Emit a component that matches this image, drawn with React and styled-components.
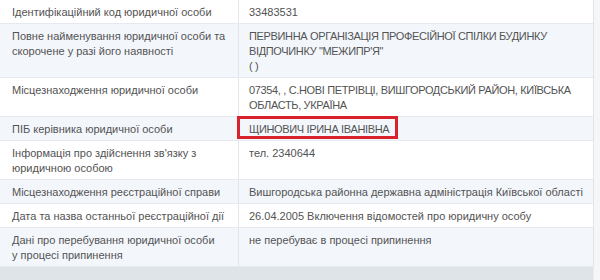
import styled, { createGlobalStyle } from 'styled-components'

const GlobalStyle = createGlobalStyle`
	body {
		margin: 0;
		background: #fff;
		font-family: 'Liberation Sans', Arial, sans-serif;
	}
`

const Page = styled.div`
	width: 600px;
	height: 280px;
	overflow: hidden;
	display: flex;
	flex-direction: column;
	background: #f4f6f8;
`

const Sheet = styled.div`
	display: flex;
	flex-direction: column;
	width: 593px;
	border-right: 1px solid #dfe5eb;
	background: #fff;
`

const Row = styled.div`
	display: grid;
	grid-template-columns: 239px 1fr;
	border-bottom: 1px solid #e4eaf0;
	background: ${({ $shaded }) => ($shaded ? '#f3f7fc' : '#fff')};
`

const Cell = styled.div`
	position: relative;
	padding: ${({ $label }) => ($label ? '5px 6px 3px 12px' : '5px 10px 3px 10px')};
	font-size: 11px;
	line-height: 15px;
	color: #535353;
	border-right: ${({ $label }) => ($label ? '1px solid #e0e6ec' : 'none')};
`

const Line = styled.div`
	letter-spacing: ${({ $caps }) => ($caps ? '-0.35px' : '0')};
`

const Mark = styled.div`
	position: absolute;
	left: -2px;
	top: -1px;
	width: 155px;
	height: 17px;
	border: 3px solid #d8222c;
`

const Footer = styled.div`
	flex: 1;
	width: 593px;
	background: #dfe4e8;
	border-right: 1px solid #e8ecef;
`

const rows = [
	{ label: ['Ідентифікаційний код юридичної особи'], value: ['33483531'] },
	{
		label: ['Повне найменування юридичної особи та', 'скорочене у разі його наявності'],
		value: ['ПЕРВИННА ОРГАНІЗАЦІЯ ПРОФЕСІЙНОЇ СПІЛКИ БУДИНКУ ВІДПОЧИНКУ "МЕЖИПР\'Я"', '( )'],
		caps: true,
	},
	{
		label: ['Місцезнаходження юридичної особи'],
		value: ['07354, , С.НОВІ ПЕТРІВЦІ, ВИШГОРОДСЬКИЙ РАЙОН, КИЇВСЬКА ОБЛАСТЬ, УКРАЇНА'],
		caps: true,
	},
	{
		label: ['ПІБ керівника юридичної особи'],
		value: ['ЩИНОВИЧ ІРИНА ІВАНІВНА'],
		caps: true,
		marked: true,
	},
	{ label: ['Інформація про здійснення зв\'язку з', 'юридичною особою'], value: ['тел. 2340644'] },
	{
		label: ['Місцезнаходження реєстраційної справи'],
		value: ['Вишгородська районна державна адміністрація Київської області'],
	},
	{
		label: ['Дата та назва останньої реєстраційної дії'],
		value: ['26.04.2005 Включення відомостей про юридичну особу'],
	},
	{
		label: ['Дані про перебування юридичної особи', 'у процесі припинення'],
		value: ['не перебуває в процесі припинення'],
	},
]

export default function App() {
	return (
		<>
			<GlobalStyle />
			<Page>
				<Sheet>
					{rows.map((row, i) => (
						<Row key={i} $shaded={i % 2 === 1}>
							<Cell $label>
								{row.label.map((line, j) => (
									<Line key={j}>{line}</Line>
								))}
							</Cell>
							<Cell>
								{row.value.map((line, j) => (
									<Line key={j} $caps={row.caps}>
										{line}
									</Line>
								))}
								{row.marked && <Mark />}
							</Cell>
						</Row>
					))}
				</Sheet>
				<Footer />
			</Page>
		</>
	)
}
